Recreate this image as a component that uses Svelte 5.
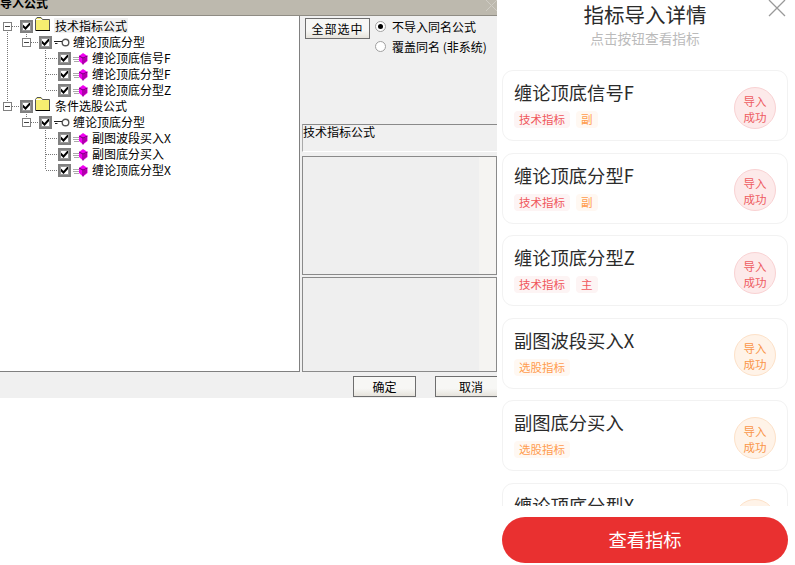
<script lang="ts">
const tree = [
	{ level: 0, kind: 'folder', label: '技术指标公式', focus: true },
	{ level: 1, kind: 'key', label: '缠论顶底分型' },
	{ level: 2, kind: 'cube', label: '缠论顶底信号F' },
	{ level: 2, kind: 'cube', label: '缠论顶底分型F' },
	{ level: 2, kind: 'cube', label: '缠论顶底分型Z' },
	{ level: 0, kind: 'folder', label: '条件选股公式' },
	{ level: 1, kind: 'key', label: '缠论顶底分型' },
	{ level: 2, kind: 'cube', label: '副图波段买入X' },
	{ level: 2, kind: 'cube', label: '副图底分买入' },
	{ level: 2, kind: 'cube', label: '缠论顶底分型X' },
];

const cards = [
	{ name: '缠论顶底信号F', tone: 'red', tags: [['技术指标', 'red'], ['副', 'orange']] },
	{ name: '缠论顶底分型F', tone: 'red', tags: [['技术指标', 'red'], ['副', 'orange']] },
	{ name: '缠论顶底分型Z', tone: 'red', tags: [['技术指标', 'red'], ['主', 'red']] },
	{ name: '副图波段买入X', tone: 'orange', tags: [['选股指标', 'orange']] },
	{ name: '副图底分买入', tone: 'orange', tags: [['选股指标', 'orange']] },
	{ name: '缠论顶底分型X', tone: 'orange', tags: [['选股指标', 'orange']] },
];
</script>

<div class="screen">
	<section class="dialog">
		<header class="titlebar">
			<span class="title-text">导入公式</span>
			<svg class="title-close" width="11" height="11" viewBox="0 0 11 11"><path d="M0 0 11 11M11 0 0 11" stroke="#cfccc4" fill="none" /></svg>
		</header>
		<div class="dialog-body">
			<div class="tree">
				<!-- dotted connectors sit over the rows -->
				<svg class="tree-lines" width="100" height="180" viewBox="0 0 100 180">
					<g stroke="#777" stroke-dasharray="1 1" fill="none">
						<path d="M7.5 32V101M12 26.5H20" />
						<path d="M12 106.5H20" />
						<path d="M26.5 32V37M31 42.5H39M26.5 112V117M31 122.5H39" />
						<path d="M45.5 48V90M46 58.5H58M46 74.5H58M46 90.5H58" />
						<path d="M45.5 128V170M46 138.5H58M46 154.5H58M46 170.5H58" />
					</g>
				</svg>
				{#each tree as row}
					<div class="row level-{row.level}">
						{#if row.level < 2}
							<span class="expander"></span>
						{/if}
						<span class="check">
							<svg width="9" height="8" viewBox="0 0 9 8"><path d="M.5 3.500 3.500 6.500 8.500 1" stroke="#000" stroke-width="2" fill="none" /></svg>
						</span>
						{#if row.kind === 'folder'}
							<svg class="icon folder" width="15" height="14" viewBox="0 0 15 14">
								<path d="M.5 13.500V2.500L2 .5h4l1.500 2h7v11z" fill="#f6ee70" stroke="#555" />
								<path d="M1 2.500H7" stroke="#fff" fill="none" />
								<path d="M1 13.500H15" stroke="#000" fill="none" />
							</svg>
						{:else if row.kind === 'key'}
							<svg class="icon" width="16" height="9" viewBox="0 0 16 9">
								<circle cx="11.500" cy="4.500" r="3.300" fill="#fff" stroke="#555" stroke-width="1.400" />
								<path d="M0 3.500H8M1 5.500H3.500" stroke="#222" fill="none" />
							</svg>
						{:else}
							<svg class="icon" width="15" height="13" viewBox="0 0 15 13">
								<path d="M0 5.500H6M0 7.500H6M1 9.500H6" stroke="#aaa" fill="none" />
								<path d="M10 1 14.500 4V9L10 12.500 6 9V4z" fill="#f000f0" />
								<path d="M10 6V12.500M6 4 10 6 14.500 4" stroke="#700070" fill="none" />
								<path d="M10.500 6.500 14 4.500V8.500L10.500 11.500z" fill="#b000a8" />
							</svg>
						{/if}
						<span class="label" class:focus={row.focus}>{row.label}</span>
					</div>
				{/each}
			</div>
			<div class="side">
				<div class="options">
					<button class="win-btn select-all">全部选中</button>
					<div class="radios">
						<label class="radio"><span class="dot on"></span>不导入同名公式</label>
						<label class="radio"><span class="dot"></span>覆盖同名 (非系统)</label>
					</div>
				</div>
				<div class="group">技术指标公式</div>
				<div class="well upper"></div>
				<div class="well lower"></div>
			</div>
		</div>
		<footer class="actions">
			<button class="win-btn action">确定</button>
			<button class="win-btn action cancel">取消</button>
		</footer>
	</section>

	<section class="panel">
		<svg class="close" width="18" height="17" viewBox="0 0 18 17"><path d="M1 0 17 16M17 0 1 16" stroke="#999" stroke-width="1.300" fill="none" /></svg>
		<h1>指标导入详情</h1>
		<p class="hint">点击按钮查看指标</p>
		<div class="list">
			{#each cards as card}
				<article class="card">
					<div class="info">
						<div class="name">{card.name}</div>
						<div class="tags">
							{#each card.tags as tag}
								<span class="tag {tag[1]}">{tag[0]}</span>
							{/each}
						</div>
					</div>
					<div class="stamp {card.tone}">导入<br />成功</div>
				</article>
			{/each}
		</div>
		<button class="primary">查看指标</button>
	</section>
</div>

<style>
	:global(body) {
		background: #fff;
	}

	.screen {
		display: grid;
		grid-template-columns: 497px 298px;
		width: 795px;
		height: 565px;
		overflow: hidden;
		font-family: "Noto Sans CJK SC", "Liberation Sans", sans-serif;
	}

	.dialog {
		display: flex;
		flex-direction: column;
		height: 398px;
		background: #f0f0f0;
		color: #000;
		font-size: 12px;
	}

	.titlebar {
		display: flex;
		justify-content: space-between;
		align-items: flex-start;
		flex: 0 0 16px;
		overflow: hidden;
		background: #bdb9ae;
		border-bottom: 1px solid #8f8c84;
		box-sizing: border-box;
	}

	.title-text {
		margin-top: -5px;
		font-size: 12px;
		font-weight: 700;
		line-height: 16px;
	}

	.dialog-body {
		display: flex;
		flex: 0 0 356px;
		height: 356px;
	}

	.tree {
		position: relative;
		box-sizing: border-box;
		width: 300px;
		padding-top: 2px;
		background: #fff;
		border-right: 1px solid #808080;
		border-bottom: 1px solid #808080;
	}

	.tree-lines {
		position: absolute;
		top: -16px;
		left: 0;
	}

	.row {
		position: relative;
		display: flex;
		align-items: center;
		height: 16px;
		line-height: 16px;
		white-space: nowrap;
	}

	.level-0 {
		padding-left: 3px;
	}

	.level-1 {
		padding-left: 22px;
	}

	.level-2 {
		padding-left: 58px;
	}

	.expander {
		position: relative;
		box-sizing: border-box;
		width: 9px;
		height: 9px;
		margin-right: 8px;
		background: linear-gradient(#444, #444) center / 5px 1px no-repeat, #fff;
		border: 1px solid #808080;
	}

	.check {
		display: flex;
		flex: none;
		align-items: center;
		justify-content: center;
		box-sizing: border-box;
		width: 13px;
		height: 13px;
		background: #fff;
		border: 2px solid #808080;
		outline: 1px solid #9a9a9a;
		outline-offset: -3px;
	}

	.icon {
		flex: none;
		margin-left: 2px;
	}

	.folder {
		margin-top: -4px;
	}

	.label {
		margin-top: -1px;
		padding: 0 1px;
	}

	.level-0 .label {
		margin-left: 4px;
		padding-left: 1px;
		line-height: 15px;
	}

	.level-1 .label {
		margin-left: 2px;
	}

	.level-2 .label {
		margin-left: 3px;
	}

	.label.focus {
		background: #f0f0f0;
	}

	.side {
		display: flex;
		flex-direction: column;
		flex: 1;
		min-width: 0;
		padding-left: 2px;
	}

	.options {
		display: flex;
		box-sizing: border-box;
		flex: 0 0 108px;
		gap: 5px;
		padding: 2px 0 0 3px;
	}

	.win-btn {
		box-sizing: border-box;
		padding: 0;
		background: linear-gradient(#f7f7f5 60%, #e6e3dc);
		border: 1px solid #6e6e6e;
		color: #000;
		font: inherit;
		line-height: 1;
	}

	.select-all {
		width: 65px;
		height: 21px;
		letter-spacing: 1px;
	}

	.radios {
		display: flex;
		flex-direction: column;
		gap: 4px;
	}

	.radio {
		display: flex;
		align-items: center;
		gap: 6px;
		height: 16px;
		white-space: nowrap;
	}

	.dot {
		position: relative;
		box-sizing: border-box;
		width: 11px;
		height: 11px;
		background: #fff;
		border: 1px solid #a0a0a0;
		border-radius: 50%;
	}

	.dot.on::after {
		content: '';
		position: absolute;
		top: 2px;
		left: 2px;
		width: 5px;
		height: 5px;
		background: #000;
		border-radius: 50%;
	}

	.group {
		box-sizing: border-box;
		flex: 0 0 28px;
		background: #f0f0f0;
		border-top: 1px solid #8a8a8a;
		border-left: 1px solid #aaa;
		border-bottom: 1px solid #fff;
		line-height: 13px;
	}

	.well {
		box-sizing: border-box;
		background: linear-gradient(90deg, #efefef 176px, #f5f4f2 176px);
		border: 1px solid #8a8a8a;
	}

	.upper {
		flex: 0 0 119px;
		margin-top: 4px;
	}

	.lower {
		flex: 0 0 95px;
		margin-top: 2px;
	}

	.actions {
		display: flex;
		flex: 1;
		align-items: flex-start;
		gap: 19px;
		box-sizing: border-box;
		padding: 4px 0 0 353px;
		overflow: hidden;
		background: #f0f0f0;
	}

	.action {
		flex: none;
		width: 63px;
		height: 21px;
	}

	.cancel {
		width: 72px;
		margin-right: -10px;
	}

	.panel {
		position: relative;
		display: flex;
		flex-direction: column;
		height: 565px;
		padding: 0 7px 0 5px;
		box-sizing: border-box;
		background: #fff;
	}

	.close {
		position: absolute;
		top: 0;
		right: 9px;
	}

	h1 {
		margin: 0;
		height: 28px;
		color: #2b2b2b;
		font-size: 20.500px;
		font-weight: 400;
		line-height: 28px;
		text-align: center;
	}

	.hint {
		margin: 0 0 2px;
		height: 40px;
		color: #bbb;
		font-size: 13.700px;
		line-height: 20px;
		text-align: center;
	}

	.list {
		display: flex;
		flex-direction: column;
		gap: 11.500px;
		height: 436px;
		overflow: hidden;
	}

	.card {
		display: flex;
		flex: 0 0 71px;
		align-items: center;
		justify-content: space-between;
		box-sizing: border-box;
		padding: 0 11px 0 12px;
		background: #fff;
		border: 1px solid #f2f2f2;
		border-radius: 11px;
	}

	.info {
		margin-top: -4px;
	}

	.name {
		margin-left: -1px;
		color: #2b2b2b;
		font-size: 18.300px;
		line-height: 26px;
	}

	.tags {
		display: flex;
		gap: 6px;
		margin-top: 6px;
		margin-left: -1px;
	}

	.tag {
		height: 17px;
		padding: 0 5px;
		border-radius: 4px;
		font-size: 11.500px;
		line-height: 17px;
	}

	.tag.red {
		background: #fdf4f4;
		color: #f0575c;
	}

	.tag.orange {
		background: #fff8f2;
		color: #ff9c4e;
	}

	.stamp {
		box-sizing: border-box;
		flex: none;
		width: 42px;
		height: 42px;
		margin-top: 4px;
		padding-top: 5px;
		border: 1px solid;
		border-radius: 50%;
		font-size: 11.500px;
		line-height: 16px;
		text-align: center;
	}

	.stamp.red {
		background: #fdeaea;
		border-color: #f9d2d3;
		color: #ee5c61;
	}

	.stamp.orange {
		background: #fff3e8;
		border-color: #fde1c8;
		color: #fa9648;
	}

	.primary {
		flex: none;
		height: 46px;
		margin-top: 11px;
		padding: 0 0 2px;
		background: #e93030;
		border: 0;
		border-radius: 23px;
		color: #fff;
		font: inherit;
		font-size: 18.300px;
	}
</style>
